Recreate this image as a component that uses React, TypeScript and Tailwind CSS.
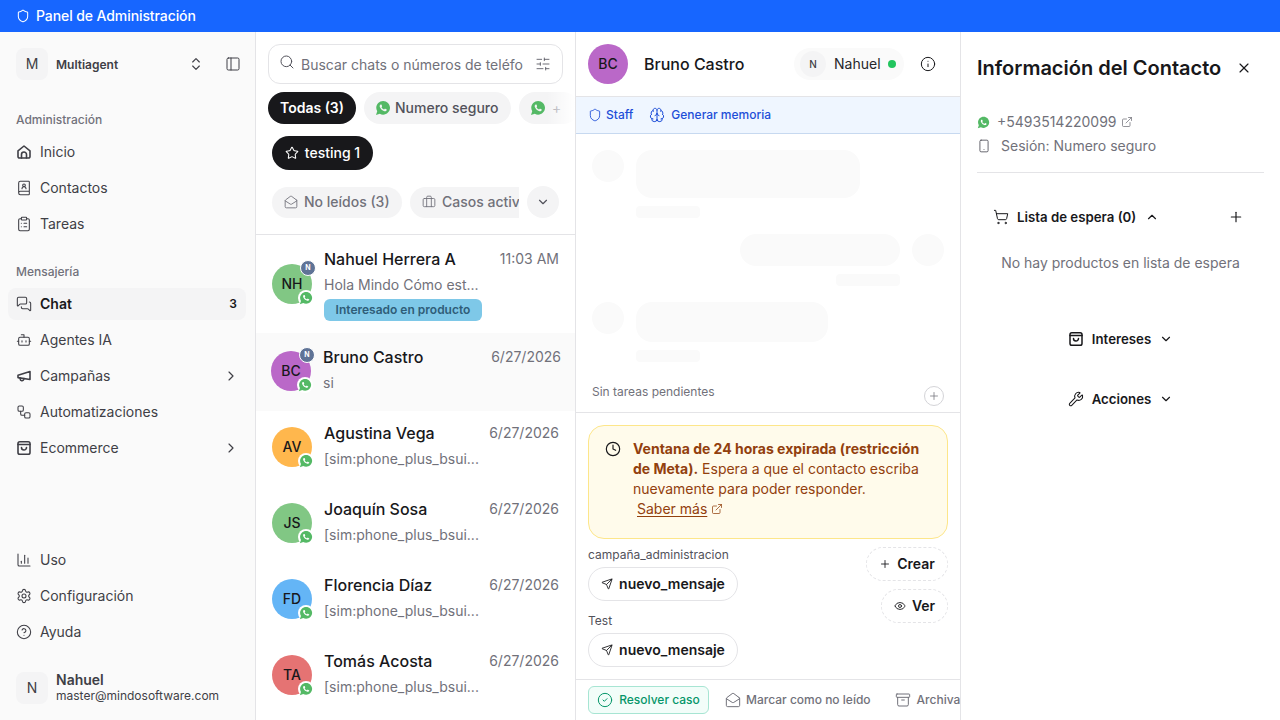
import React from "react";
import {
  Shield, ChevronsUpDown, PanelLeft, BookUser, ClipboardList, MessagesSquare, Bot, Workflow,
  ChevronRight, ChartColumn, Settings, CircleHelp, Search, SlidersHorizontal, Star, MailOpen, Briefcase,
  ChevronDown, ChevronUp, Info, Brain, Plus, Clock, ExternalLink, Send, Eye, CircleCheck, Archive, X, Smartphone, ShoppingCart, Wrench,
} from "lucide-react";
import { IoLogoWhatsapp } from "react-icons/io";

type IconP = { size?: number; strokeWidth?: number; className?: string };

function HomeIcon({ size = 16, strokeWidth = 1.5, className }: IconP) {
  return (
    <svg width={size} height={size} viewBox="0 0 16 16" fill="none" stroke="currentColor" strokeWidth={strokeWidth} strokeLinejoin="round" strokeLinecap="round" className={className}>
      <path d="M2 6.8 8 2l6 4.8v5.7a1.5 1.5 0 0 1-1.5 1.5h-9A1.5 1.5 0 0 1 2 12.500Z" />
      <path d="M5.500 14v-3.500a2.500 2.500 0 0 1 5 0V14" />
    </svg>
  );
}

function BagIcon({ size = 16, strokeWidth = 1.5, className }: IconP) {
  return (
    <svg width={size} height={size} viewBox="0 0 16 16" fill="none" stroke="currentColor" strokeWidth={strokeWidth} strokeLinejoin="round" strokeLinecap="round" className={className}>
      <rect x="2" y="1.800" width="12" height="12.400" rx="1.800" />
      <path d="M2 4.500h12" />
      <path d="M5.500 7.500a2.500 2.500 0 0 0 5 0" />
    </svg>
  );
}

function HornIcon({ size = 16, strokeWidth = 1.5, className }: IconP) {
  return (
    <svg width={size} height={size} viewBox="0 0 16 16" fill="none" stroke="currentColor" strokeWidth={strokeWidth} strokeLinejoin="round" strokeLinecap="round" className={className}>
      <path d="M2 7.200 14 3.500v8L2 9.600Z" />
      <path d="M4.200 10v1a1.800 1.800 0 0 0 3.500.500l.2-.9" />
    </svg>
  );
}

type NavP = { icon: React.ElementType; label: string; active?: boolean; chevron?: boolean; badge?: string };

function NavItem({ icon: I, label, active, chevron, badge }: NavP) {
  return (
    <div className={"ml-2 mr-[9px] flex h-8 items-center rounded-lg pl-2 pr-[7px] " + (active ? "bg-[#f4f4f5] font-semibold text-[#18181b]" : "text-[#3f3f46]")}>
      <I size={16} strokeWidth={1.6} className="mr-2 shrink-0 text-[#3f3f46]" />
      <span className="flex-1 text-sm">{label}</span>
      {badge && <span className="mr-[2px] text-xs font-semibold">{badge}</span>}
      {chevron && <ChevronRight size={16} strokeWidth={1.75} />}
    </div>
  );
}

function Label({ children }: { children: React.ReactNode }) {
  return <div className="mb-[-4px] flex h-8 items-center px-4 text-xs font-medium text-[#71717a]">{children}</div>;
}

function Sidebar() {
  return (
    <aside className="flex h-full w-64 shrink-0 flex-col border-r border-[#e4e4e7] bg-[#fafafa]">
      <div className="flex items-center py-4 pl-4 pr-[14px]">
        <div className="flex h-8 w-8 items-center justify-center rounded-lg bg-[#f4f4f5] text-sm text-[#3f3f46]">M</div>
        <span className="ml-2 flex-1 pt-px text-xs font-semibold text-[#3f3f46]">Multiagent</span>
        <ChevronsUpDown size={16} strokeWidth={1.75} className="mr-[21px] text-[#3f3f46]" />
        <PanelLeft size={16} strokeWidth={1.5} className="text-[#3f3f46]" />
      </div>
      <div className="flex flex-col gap-1 pb-2 pt-[8px]">
        <Label>Administración</Label>
        <NavItem icon={HomeIcon} label="Inicio" />
        <NavItem icon={BookUser} label="Contactos" />
        <NavItem icon={ClipboardList} label="Tareas" />
      </div>
      <div className="flex flex-col gap-1 pb-2 pt-[8px]">
        <Label>Mensajería</Label>
        <NavItem icon={MessagesSquare} label="Chat" active badge="3" />
        <NavItem icon={Bot} label="Agentes IA" />
        <NavItem icon={HornIcon} label="Campañas" chevron />
        <NavItem icon={Workflow} label="Automatizaciones" />
        <NavItem icon={BagIcon} label="Ecommerce" chevron />
      </div>
      <div className="mt-auto flex flex-col gap-1 pb-6">
        <NavItem icon={ChartColumn} label="Uso" />
        <NavItem icon={Settings} label="Configuración" />
        <NavItem icon={CircleHelp} label="Ayuda" />
      </div>
      <div className="flex items-center pb-4 pl-4">
        <div className="flex h-8 w-8 items-center justify-center rounded-lg bg-[#f4f4f5] text-sm text-[#3f3f46]">N</div>
        <div className="ml-2 flex flex-col text-[#3f3f46]">
          <span className="text-sm font-semibold leading-4">Nahuel</span>
          <span className="text-xs leading-4">master@mindosoftware.com</span>
        </div>
      </div>
    </aside>
  );
}

function Wa({ size = 16 }: { size?: number }) {
  return <IoLogoWhatsapp size={size} className="shrink-0 text-[#54b965]" />;
}

type Row = { ini: string; color: string; name: string; time: string; msg: string; agent?: boolean; tag?: boolean; selected?: boolean; h: string };

const rows: Row[] = [
  { ini: "NH", color: "bg-[#81c784]", name: "Nahuel Herrera A", time: "11:03 AM", msg: "Hola Mindo Cómo est...", agent: true, tag: true, h: "h-[98px]" },
  { ini: "BC", color: "bg-[#ba68c8]", name: "Bruno Castro", time: "6/27/2026", msg: "si", agent: true, selected: true, h: "h-[78px]" },
  { ini: "AV", color: "bg-[#ffb74d]", name: "Agustina Vega", time: "6/27/2026", msg: "[sim:phone_plus_bsui...", h: "h-[76px]" },
  { ini: "JS", color: "bg-[#81c784]", name: "Joaquín Sosa", time: "6/27/2026", msg: "[sim:phone_plus_bsui...", h: "h-[76px]" },
  { ini: "FD", color: "bg-[#64b5f6]", name: "Florencia Díaz", time: "6/27/2026", msg: "[sim:phone_plus_bsui...", h: "h-[76px]" },
  { ini: "TA", color: "bg-[#e57373]", name: "Tomás Acosta", time: "6/27/2026", msg: "[sim:phone_plus_bsui...", h: "h-[76px]" },
];

function ChatRow({ r }: { r: Row }) {
  return (
    <div className={"flex shrink-0 items-start " + r.h + " " + (r.selected ? "bg-[#fafafa] pl-[15px] pr-[14px] pt-3" : "px-4 " + (r.tag ? "pt-3" : "pt-[10px]"))}>
      <div className={"relative flex h-10 w-10 shrink-0 items-center justify-center rounded-full text-sm font-medium text-[#18181b] " + r.color + " " + (r.tag ? "mt-[17px]" : "mt-[6px]")}>
        {r.ini}
        {r.agent && (
          <span className="absolute right-[-4px] top-[-4px] flex h-[16px] w-[16px] items-center justify-center rounded-full border border-white bg-[#5f7396] text-[7px] font-bold text-white">N</span>
        )}
        <span className="absolute bottom-[-2px] right-[-2px] flex h-[16px] w-[16px] items-center justify-center rounded-full bg-white">
          <Wa size={14} />
        </span>
      </div>
      <div className="ml-3 flex-1">
        <div className="flex items-center justify-between">
          <span className="text-base font-medium leading-6 text-[#18181b]">{r.name}</span>
          <span className="text-sm text-[#71717a]">{r.time}</span>
        </div>
        <div className="mt-[2px] text-sm leading-6 text-[#71717a]">{r.msg}</div>
        {r.tag && (
          <div className="mt-[2px] flex h-[22px] w-[158px] items-center justify-center rounded-md bg-[#7ec8e8] text-xs font-semibold text-[#2f5d78]">Interesado en producto</div>
        )}
      </div>
    </div>
  );
}

function ChatList() {
  return (
    <section className="flex h-full w-80 shrink-0 flex-col overflow-hidden border-r border-[#e4e4e7] bg-white">
      <div className="h-[203px] shrink-0 border-b border-[#e4e4e7] pb-[15px] pl-3 pt-3">
        <div className="mr-3 flex h-10 items-center rounded-xl border border-[#e4e4e7] pl-[10px] pr-[11px]">
          <Search size={16} strokeWidth={1.5} className="mb-1 mr-[6px] shrink-0 text-[#52525b]" />
          <span className="flex-1 overflow-hidden whitespace-nowrap pt-px text-sm text-[#71717a]">Buscar chats o números de teléfo</span>
          <SlidersHorizontal size={16} strokeWidth={1.25} className="ml-3 shrink-0 text-[#52525b]" />
        </div>
        <div className="relative mt-2 flex h-8 gap-2 overflow-hidden">
          <div className="flex h-8 w-[88px] shrink-0 items-center justify-center whitespace-nowrap rounded-full bg-[#18181b] text-sm font-semibold text-white">Todas (3)</div>
          <div className="flex h-8 w-[147px] shrink-0 items-center gap-[4px] whitespace-nowrap rounded-full bg-[#f4f4f5] pl-[11px] text-sm font-medium text-[#52525b]"><Wa size={16} />Numero seguro</div>
          <div className="flex h-8 w-[60px] shrink-0 items-center gap-[6px] rounded-full bg-[#f4f4f5] pl-[11px] text-sm text-[#a1a1aa]"><Wa size={16} />+</div>
          <div className="absolute right-0 top-0 h-8 w-[28px] bg-gradient-to-r from-transparent to-white" />
        </div>
        <div className="ml-1 mt-3 flex h-[34px] w-[101px] items-center justify-center gap-[6px] rounded-full bg-[#18181b] text-sm font-medium text-white">
          <Star size={14} strokeWidth={1.75} />testing 1
        </div>
        <div className="ml-1 mt-4 flex h-8 items-center">
          <div className="flex h-[31px] w-[130px] items-center gap-[6px] whitespace-nowrap rounded-full bg-[#f4f4f5] pl-3 text-sm font-medium text-[#71717a]"><MailOpen size={14} strokeWidth={1.5} />No leídos (3)</div>
          <div className="ml-2 flex h-[31px] w-[109px] items-center gap-[6px] overflow-hidden whitespace-nowrap rounded-l-full bg-[#f4f4f5] pl-3 text-sm font-medium text-[#71717a]"><Briefcase size={14} strokeWidth={1.5} className="shrink-0" />Casos activos</div>
          <div className="ml-2 flex h-8 w-8 items-center justify-center rounded-full bg-[#f4f4f5] text-[#52525b]"><ChevronDown size={14} /></div>
        </div>
      </div>
      <div className="flex flex-col">
        {rows.map((r) => <ChatRow key={r.ini} r={r} />)}
      </div>
    </section>
  );
}

function Skel({ className }: { className: string }) {
  return <div className={"bg-[#fafafa] " + className} />;
}

function TemplateBtn() {
  return (
    <div className="flex h-[34px] w-[150px] items-center justify-center gap-[6px] rounded-full border border-[#e4e4e7] text-sm font-semibold text-[#18181b]">
      <Send size={12} strokeWidth={1.75} />nuevo_mensaje
    </div>
  );
}

function ChatPane() {
  return (
    <section className="flex h-full w-[385px] shrink-0 flex-col overflow-hidden border-r border-[#e4e4e7] bg-white">
      <div className="flex h-[65px] shrink-0 items-center border-b border-[#e4e4e7] pl-3">
        <div className="flex h-10 w-10 items-center justify-center rounded-full bg-[#ba68c8] text-sm font-medium text-[#18181b]">BC</div>
        <span className="ml-4 flex-1 text-base font-medium text-[#18181b]">Bruno Castro</span>
        <div className="flex h-8 w-[110px] items-center rounded-full bg-[#fafafa] pl-[6px]">
          <span className="flex h-[26px] w-[26px] items-center justify-center rounded-full bg-[#f4f4f5] text-[10px] font-medium text-[#3f3f46]">N</span>
          <span className="ml-2 text-sm text-[#27272a]">Nahuel</span>
          <span className="ml-[7px] h-2 w-2 rounded-full bg-[#22c55e]" />
        </div>
        <Info size={16} strokeWidth={1.5} className="ml-4 mr-6 text-[#18181b]" />
      </div>
      <div className="flex h-[37px] shrink-0 items-center border-b border-[#c7d9f0] bg-[#eff6ff] pl-3 text-xs font-medium text-[#1d4ed8]">
        <Shield size={14} strokeWidth={1.5} />
        <span className="ml-1">Staff</span>
        <Brain size={16} strokeWidth={1.5} className="ml-4" />
        <span className="ml-[6px]">Generar memoria</span>
      </div>
      <div className="flex h-[279px] shrink-0 flex-col border-b border-[#e4e4e7] px-4 pt-4">
        <div className="flex gap-3">
          <Skel className="h-8 w-8 rounded-full" />
          <div><Skel className="h-12 w-[224px] rounded-2xl" /><Skel className="mt-2 h-3 w-16 rounded" /></div>
        </div>
        <div className="mt-4 flex flex-row-reverse gap-3">
          <Skel className="h-8 w-8 rounded-full" />
          <div className="flex flex-col items-end"><Skel className="h-8 w-40 rounded-2xl" /><Skel className="mt-2 h-3 w-16 rounded" /></div>
        </div>
        <div className="mt-4 flex gap-3">
          <Skel className="h-8 w-8 rounded-full" />
          <div><Skel className="h-10 w-48 rounded-2xl" /><Skel className="mt-2 h-3 w-16 rounded" /></div>
        </div>
        <div className="mt-6 flex items-start justify-between text-xs leading-4 text-[#71717a]">
          <span className="mt-[-2px]">Sin tareas pendientes</span>
          <span className="flex h-5 w-5 items-center justify-center rounded-full border border-[#d4d4d8]"><Plus size={12} strokeWidth={1.5} /></span>
        </div>
      </div>
      <div className="flex flex-1 flex-col px-3 pt-3">
        <div className="flex h-[114px] shrink-0 rounded-2xl border border-[#fde68a] bg-[#fffbeb] pl-4 pt-[13px] text-sm leading-5 text-[#92400e]">
          <Clock size={16} strokeWidth={1.75} className="mt-[2px] shrink-0 text-[#18181b]" />
          <div className="ml-3 w-[296px]">
            <span className="font-bold">Ventana de 24 horas expirada (restricción de Meta).</span> Espera a que el contacto escriba nuevamente para poder responder.
            <div className="ml-1 flex items-center gap-1">
              <span className="underline underline-offset-2">Saber más</span>
              <ExternalLink size={12} strokeWidth={1.5} />
            </div>
          </div>
        </div>
        <div className="mt-2 flex justify-between">
          <div className="flex flex-col">
            <span className="text-xs leading-4 text-[#52525b]">campaña_administracion</span>
            <div className="mt-1"><TemplateBtn /></div>
            <span className="mt-3 text-xs leading-4 text-[#52525b]">Test</span>
            <div className="mt-1"><TemplateBtn /></div>
          </div>
          <div className="flex flex-col items-end gap-2">
            <div className="flex h-[34px] w-[82px] items-center justify-center gap-[6px] rounded-full border border-dashed border-[#e4e4e7] text-sm font-semibold text-[#18181b]"><Plus size={12} strokeWidth={1.75} />Crear</div>
            <div className="flex h-[34px] w-[67px] items-center justify-center gap-[6px] rounded-full border border-dashed border-[#e4e4e7] text-sm font-semibold text-[#18181b]"><Eye size={12} strokeWidth={1.75} />Ver</div>
          </div>
        </div>
      </div>
      <div className="flex h-[41px] shrink-0 items-center overflow-hidden whitespace-nowrap border-t border-[#e4e4e7] pl-3 text-xs font-medium text-[#71717a]">
        <div className="flex h-7 w-[121px] shrink-0 items-center justify-center gap-[6px] rounded-md border border-[#a7e5d3] bg-[#f2fdf9] text-[#059669]"><CircleCheck size={16} strokeWidth={1.5} />Resolver caso</div>
        <MailOpen size={16} strokeWidth={1.5} className="ml-4 shrink-0" />
        <span className="ml-[5px]">Marcar como no leído</span>
        <Archive size={16} strokeWidth={1.5} className="ml-6 shrink-0" />
        <span className="ml-[6px]">Archivar</span>
      </div>
    </section>
  );
}

function Details() {
  return (
    <section className="flex h-full flex-1 flex-col bg-white px-4 pt-5">
      <div className="flex h-8 items-center">
        <h2 className="flex-1 text-xl font-semibold text-[#18181b]">Información del Contacto</h2>
        <X size={16} strokeWidth={1.75} className="mr-3 text-[#18181b]" />
      </div>
      <div className="mt-[26px] flex h-6 items-center text-sm text-[#71717a]">
        <Wa size={13} />
        <span className="ml-[7px]">+5493514220099</span>
        <ExternalLink size={12} strokeWidth={1.5} className="ml-1" />
      </div>
      <div className="flex h-6 items-center text-sm text-[#71717a]">
        <Smartphone size={14} strokeWidth={1.5} className="text-[#52525b]" />
        <span className="ml-[10px]">Sesión: Numero seguro</span>
      </div>
      <div className="mt-[14px] border-t border-[#e4e4e7]" />
      <div className="ml-4 mt-8 flex h-6 items-center text-[13.25px] font-semibold text-[#18181b]">
        <ShoppingCart size={16} strokeWidth={1.5} />
        <span className="ml-2 pt-px">Lista de espera (0)</span>
        <ChevronUp size={14} strokeWidth={2} className="ml-[9px]" />
        <Plus size={16} strokeWidth={1.75} className="ml-auto mr-5" />
      </div>
      <p className="mt-6 text-center text-sm leading-5 text-[#71717a]">No hay productos en lista de espera</p>
      <div className="mt-[54px] flex h-6 items-center justify-center gap-2 text-[13.25px] font-semibold text-[#18181b]">
        <BagIcon size={16} strokeWidth={1.5} /><span className="pt-px">Intereses</span><ChevronDown size={14} strokeWidth={2} />
      </div>
      <div className="mt-9 flex h-6 items-center justify-center gap-2 text-[13.25px] font-semibold text-[#18181b]">
        <Wrench size={16} strokeWidth={1.6} /><span className="pt-px">Acciones</span><ChevronDown size={14} strokeWidth={2} />
      </div>
    </section>
  );
}

export default function App() {
  return (
    <div className="flex h-screen w-full flex-col overflow-hidden bg-white font-['Inter',sans-serif]">
      <header className="flex h-8 shrink-0 items-center gap-[6px] bg-[#1766ff] pl-4 text-sm font-medium tracking-[-0.09px] text-white">
        <Shield size={14} strokeWidth={1.75} />Panel de Administración
      </header>
      <main className="flex min-h-0 flex-1">
        <Sidebar />
        <ChatList />
        <ChatPane />
        <Details />
      </main>
    </div>
  );
}
